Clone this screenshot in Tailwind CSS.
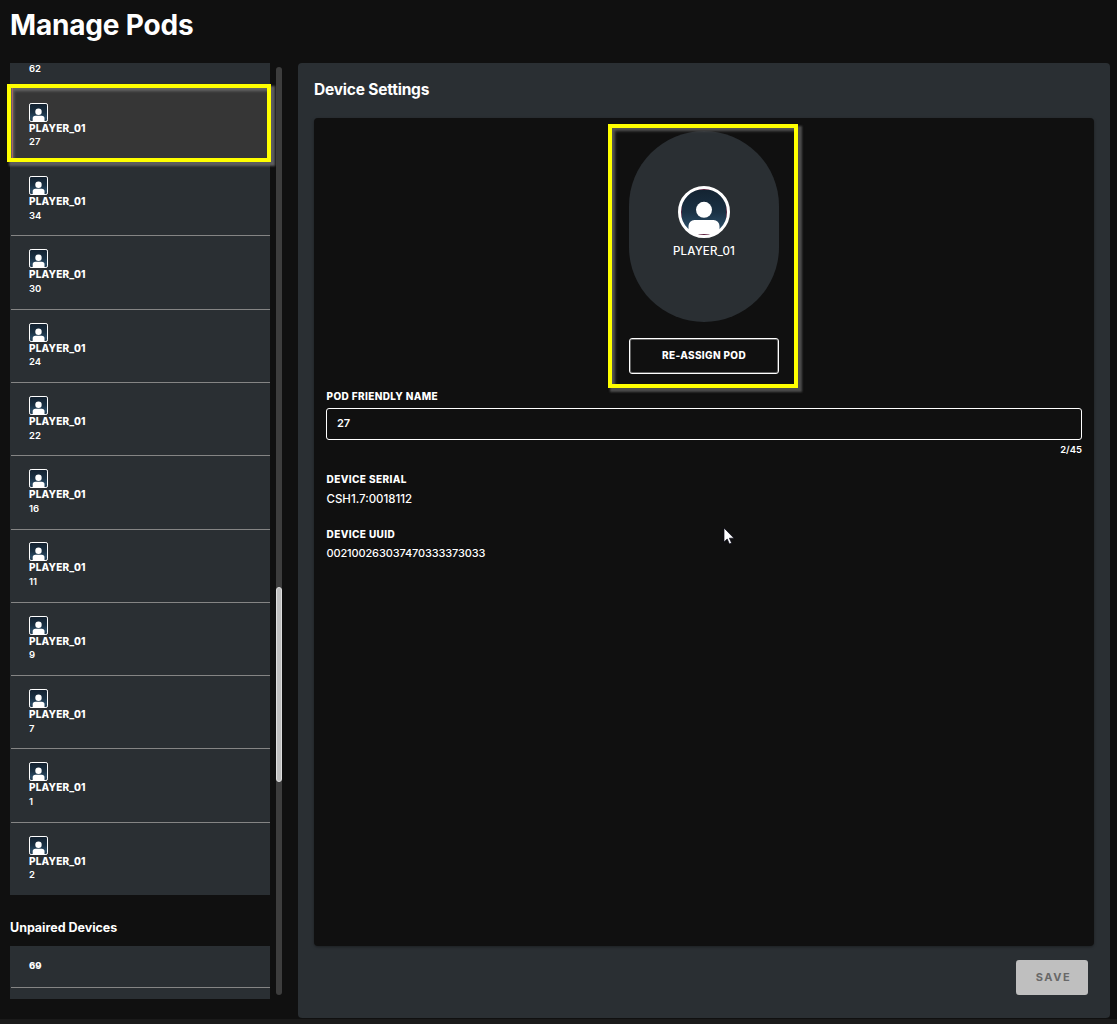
<!DOCTYPE html>
<html lang="en">
<head>
<meta charset="utf-8">
<title>Manage Pods</title>
<script src="https://cdn.jsdelivr.net/npm/@tailwindcss/browser@4"></script>
</head>
<body class="relative h-[1024px] w-[1117px] overflow-hidden bg-[#101010] font-['Inter',sans-serif] text-white">
<svg width="0" height="0" class="absolute">
  <defs>
    <linearGradient id="night" x1="0" y1="0" x2="0" y2="1"><stop offset="0" stop-color="#13212f"/><stop offset=".5" stop-color="#1a3144"/><stop offset=".8" stop-color="#2b4c66"/><stop offset="1" stop-color="#1d3448"/></linearGradient>
    <symbol id="avatar" viewBox="0 0 19 19"><rect x=".5" y=".5" width="18" height="18" rx="1.6" fill="url(#night)" stroke="#fff"/><circle cx="9.5" cy="8.8" r="3.2" fill="#fff"/><path d="M3.7 18v-2.4a2.8 2.8 0 0 1 2.8-2.8h6.2a2.8 2.8 0 0 1 2.8 2.8V18z" fill="#fff"/></symbol>
  </defs>
</svg>
<div class="flex h-[1019px] flex-col">
  <header class="h-[63px] shrink-0 pl-[10px] pt-[5px]"><h1 class="w-fit whitespace-nowrap text-[28px] leading-[40px] font-bold tracking-[-0.18px]">Manage Pods</h1></header>
  <main class="flex">
    <aside class="ml-[10px] h-[936px] w-[260px] shrink-0 overflow-hidden">
      <div class="h-[26.96px] bg-[#2a2f33] pl-[19px] text-[9.5px] leading-[11px] font-semibold">62</div>
      <div id="pods"></div>
      <h2 class="mt-[25px] mb-[10px] w-fit whitespace-nowrap text-[12.5px] leading-4 font-bold tracking-[-0.02px]">Unpaired Devices</h2>
      <div class="bg-[#2a2f33]">
        <div class="ml-[1px] h-[42px] border-b border-[#858585] pt-[13px] pl-[18px] text-[9.5px] leading-[13px] font-extrabold">69</div>
        <div class="h-[40px]"></div>
      </div>
    </aside>
    <div class="mt-[4px] ml-[6px] h-[928px] w-[6px] shrink-0 rounded-full bg-[#3d3d3d] pt-[520px]"><div class="h-[195px] rounded-full border border-[#dedede] bg-[#bfbfbf]"></div></div>
    <section class="ml-[16px] h-[955px] w-[812px] shrink-0 rounded-[4px] bg-[#2a2f33] px-[16px] pt-[17px]">
      <h2 class="w-fit whitespace-nowrap text-[15.5px] leading-[20px] font-bold tracking-[-0.2px]">Device Settings</h2>
      <div class="mt-[18px] h-[828px] rounded-[4px] bg-[#101010] px-[12px] pt-[13px] shadow-[0_1px_3px_rgba(0,0,0,0.35)]">
        <div class="mx-auto flex h-[191px] w-[150px] flex-col items-center rounded-full bg-[#2a2f33] pt-[55px]">
          <svg class="size-[52px]" viewBox="0 0 52 52"><defs><clipPath id="disc"><circle cx="26" cy="26" r="24"/></clipPath></defs><g clip-path="url(#disc)"><rect width="52" height="52" fill="url(#night)"/><path d="M11 3.3h30M11 48.7h30M3.2 18v18M48.8 18v18" stroke="#651d3d"/><circle cx="26" cy="23.8" r="8" fill="#fff"/><path d="M10.5 48V40a6 6 0 0 1 6-6h19a6 6 0 0 1 6 6v8z" fill="#fff"/></g><path d="M15 48.6h22" stroke="#651d3d" stroke-width=".6"/><circle cx="26" cy="26" r="24.5" fill="none" stroke="#fff" stroke-width="3"/></svg>
          <div class="mt-[5px] whitespace-nowrap text-[11.5px] leading-4 font-medium tracking-[0.15px]">PLAYER_01</div>
        </div>
        <button class="mx-auto mt-[16px] flex h-[36px] w-[150px] items-center justify-center rounded-[3px] border border-white pb-[2px] text-[10px] font-extrabold tracking-[0.35px] shadow-[inset_0_0_0_1px_rgba(255,255,255,0.35)]"><span>RE-ASSIGN POD</span></button>
        <div class="mt-[14px] ml-[0.5px] w-fit text-[10px] leading-4 font-extrabold tracking-[0.38px]">POD FRIENDLY NAME</div>
        <div class="mt-[4px] h-[32px] rounded-[3px] border border-white pl-[10px] text-[11px] leading-[29px] font-semibold">27</div>
        <div class="mt-[2px] text-right text-[9.5px] leading-4 font-semibold">2/45</div>
        <div class="mt-[13px] ml-[0.5px] text-[10px] leading-4 font-extrabold tracking-[0.4px]"><span>DEVICE SERIAL</span></div>
        <div class="mt-[4px] ml-[0.5px] text-[11.5px] leading-4 font-medium"><span>CSH1.7:0018112</span></div>
        <div class="mt-[19px] ml-[0.5px] text-[10px] leading-4 font-extrabold tracking-[0.4px]"><span>DEVICE UUID</span></div>
        <div class="mt-[3px] ml-[0.5px] text-[11px] leading-4 font-medium tracking-[-0.13px]"><span>002100263037470333373033</span></div>
      </div>
      <div class="flex justify-end pt-[14px] pr-[6px]"><button class="h-[35px] w-[72px] rounded-[3px] bg-[#bfbfbf] pl-[3px] text-[11px] font-bold tracking-[1.6px] text-[#686868]">SAVE</button></div>
    </section>
  </main>
</div>
<div class="h-[5px] bg-[#1a1a1a]"></div>
<div class="absolute top-[84px] left-[7px] h-[78px] w-[264px] border-4 border-[#ff0] pl-[1px] shadow-[3px_3px_2px_1px_#5c5c5e,inset_3px_3px_3px_#666]"><div class="h-full w-px bg-[#a86464]"></div></div>
<div class="absolute top-[124px] left-[608px] h-[264px] w-[190px] border-4 border-[#ff0] shadow-[3px_3px_2px_1px_#4c4c4c,inset_3px_3px_3px_#555]"></div>
<svg class="absolute top-[527px] left-[723px]" width="13" height="19" viewBox="0 0 13 19"><path d="M1 1v14l3.2-3 2.2 5 2.2-1-2.2-4.8H11z" fill="#fff" stroke="#080818" stroke-width=".7"/></svg>
<script>
const numbers = [27, 34, 30, 24, 22, 16, 11, 9, 7, 1, 2];
document.getElementById('pods').innerHTML = numbers.map((n, i) => `
<div class="${i === 0 ? 'bg-[#363636]' : 'bg-[#2a2f33]'} pl-[1px]">
  <div class="${i === 10 ? 'h-[72.28px]' : 'h-[73.28px] border-b border-[#858585]'} pt-[12.9px] pl-[18px]">
    <svg class="block size-[19px]"><use href="#avatar"/></svg>
    <div class="w-fit text-[10px] leading-[13px] font-extrabold tracking-[0.17px]">PLAYER_01</div>
    <div class="pt-[0.6px] text-[9.5px] leading-[14px] font-semibold">${n}</div>
  </div>
</div>`).join('');
</script>
</body>
</html>
